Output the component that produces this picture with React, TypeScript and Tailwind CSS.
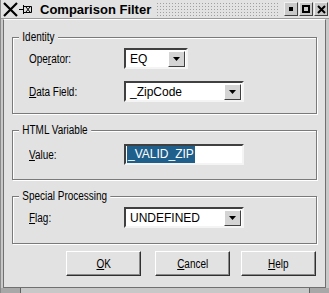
import React from "react";

const reg = { fontFamily: '"Liberation Sans", Arial, sans-serif' };

function N({ children, c }: { children: React.ReactNode; c?: boolean }) {
  return (
    <span className={`inline-block scale-x-[0.83] ${c ? "origin-center" : "origin-left"} whitespace-nowrap`}>{children}</span>
  );
}

function Arrow() {
  return (
    <div className="w-[17px] h-[16px] bg-[#d4d4d4] border border-t-white border-l-white border-r-[#404040] border-b-[#404040] flex items-center justify-center">
      <svg width="7" height="4" viewBox="0 0 7 4"><path d="M0 0H7L3.5 4Z" fill="#000" /></svg>
    </div>
  );
}

function Combo({ text, w }: { text: string; w: string }) {
  return (
    <div className={`${w} h-[21px] bg-white border-2 border-t-[#404040] border-l-[#404040] border-r-[#f4f4f4] border-b-[#f4f4f4] flex items-center justify-between pl-[4px] pr-[1px]`}>
      <span className="text-[12px] text-black leading-none">{text}</span>
      <Arrow />
    </div>
  );
}

function Group({ label, children, h }: { label: string; children: React.ReactNode; h: string }) {
  return (
    <div className={`relative ${h} border border-[#7a7a7a] shadow-[inset_1px_1px_0_#fff,1px_1px_0_#fff]`}>
      <div className="absolute -top-[8px] left-[6px] bg-[#e2e2e2] px-[4px] text-[12px] leading-[14px] text-black origin-left scale-x-[0.83] whitespace-nowrap">{label}</div>
      {children}
    </div>
  );
}

function Btn({ children }: { children: React.ReactNode }) {
  return (
    <div className="w-[75px] h-[25px] bg-[#e2e2e2] border border-t-white border-l-white border-r-[#303030] border-b-[#303030] shadow-[inset_-1px_-1px_0_#8a8a8a] flex items-center justify-center text-[12px] text-black">
      <N c>{children}</N>
    </div>
  );
}

function TBtn({ children }: { children: React.ReactNode }) {
  return (
    <div className="w-[14px] h-[14px] bg-[#c8c8c8] border border-t-[#f0f0f0] border-l-[#f0f0f0] border-r-[#404040] border-b-[#404040] flex items-center justify-center">
      {children}
    </div>
  );
}

export default function App() {
  return (
    <div style={reg} className="w-[329px] h-[293px] bg-[#e2e2e2] relative overflow-hidden select-none border-l border-[#8a8a8a]">
      {/* title bar */}
      <div className="h-[19px] flex items-center bg-[#e2e2e2] border-b border-[#9a9a9a]">
        <div className="pl-[2px] flex items-center">
          <svg width="15" height="15" viewBox="0 0 15 15">
            <path d="M1 1L14 14M14 1L1 14" stroke="#000" strokeWidth="2.2" />
          </svg>
          <svg width="14" height="10" viewBox="0 0 14 10" className="ml-[1px]">
            <path d="M0 5.5H4M4.5 1V10M4.5 2.5H12.5V8.5H4.5M7 3L11 8M11 3L7 8" stroke="#000" strokeWidth="1" fill="none" />
          </svg>
        </div>
        <span className="ml-[7px] text-[13px] font-bold text-black leading-none">Comparison Filter</span>
        <div className="flex-1 mx-[5px] h-[15px] bg-[radial-gradient(circle,#a0a0a0_0.8px,transparent_0.9px)] bg-[length:3px_3px]" />
        <div className="flex gap-[1px] pr-[1px]">
          <TBtn><div className="w-[4px] h-[4px] bg-black" /></TBtn>
          <TBtn><div className="w-[8px] h-[8px] border-2 border-black" /></TBtn>
          <TBtn>
            <svg width="9" height="9" viewBox="0 0 9 9"><path d="M1 1L8 8M8 1L1 8" stroke="#000" strokeWidth="2" /></svg>
          </TBtn>
        </div>
      </div>
      {/* body */}
      <div className="absolute left-0 top-[19px] right-0 bottom-0 border-l-[2px] border-r-[3px] border-b-[5px] border-[#c8c8c8]">
        <div className="h-full border border-t-white border-l-[#707070] border-r-[#707070] border-b-[#707070] px-[8px] pt-[17px] flex flex-col">
          <Group label="Identity" h="h-[77px]">
            <div className="pt-[10px] pl-[16px] flex flex-col gap-[12px]">
              <div className="flex items-center">
                <span className="w-[95px] text-[12px]"><N>Ope<u>r</u>ator:</N></span>
                <Combo text="EQ" w="w-[64px]" />
              </div>
              <div className="flex items-center">
                <span className="w-[95px] text-[12px]"><N><u>D</u>ata Field:</N></span>
                <Combo text="_ZipCode" w="w-[120px]" />
              </div>
            </div>
          </Group>
          <div className="h-[16px]" />
          <Group label="HTML Variable" h="h-[50px]">
            <div className="pt-[13px] pl-[16px] flex items-center">
              <span className="w-[95px] text-[12px]"><N><u>V</u>alue:</N></span>
              <div className="w-[120px] h-[21px] bg-white border-2 border-t-[#404040] border-l-[#404040] border-r-[#f4f4f4] border-b-[#f4f4f4] flex items-center pl-[1px]">
                <span className="bg-[#1e5f8c] text-white text-[12px] leading-[17px] px-[1px]">_VALID_ZIP</span>
              </div>
            </div>
          </Group>
          <div className="h-[16px]" />
          <Group label="Special Processing" h="h-[48px]">
            <div className="pt-[10px] pl-[16px] flex items-center">
              <span className="w-[95px] text-[12px]"><N><u>F</u>lag:</N></span>
              <Combo text="UNDEFINED" w="w-[120px]" />
            </div>
          </Group>
          <div className="flex justify-end pt-[7px] pr-[1px]">
            <Btn><u>O</u>K</Btn>
            <div className="w-[14px]" />
            <Btn><u>C</u>ancel</Btn>
            <div className="w-[11px]" />
            <Btn><u>H</u>elp</Btn>
          </div>
        </div>
      </div>
      {/* resize grips */}
      <div className="absolute left-0 bottom-0 w-[20px] h-[5px] bg-[#a8a8a8] border-r border-[#606060]" />
      <div className="absolute right-0 bottom-0 w-[20px] h-[5px] bg-[#a8a8a8] border-l border-[#606060]" />
    </div>
  );
}
